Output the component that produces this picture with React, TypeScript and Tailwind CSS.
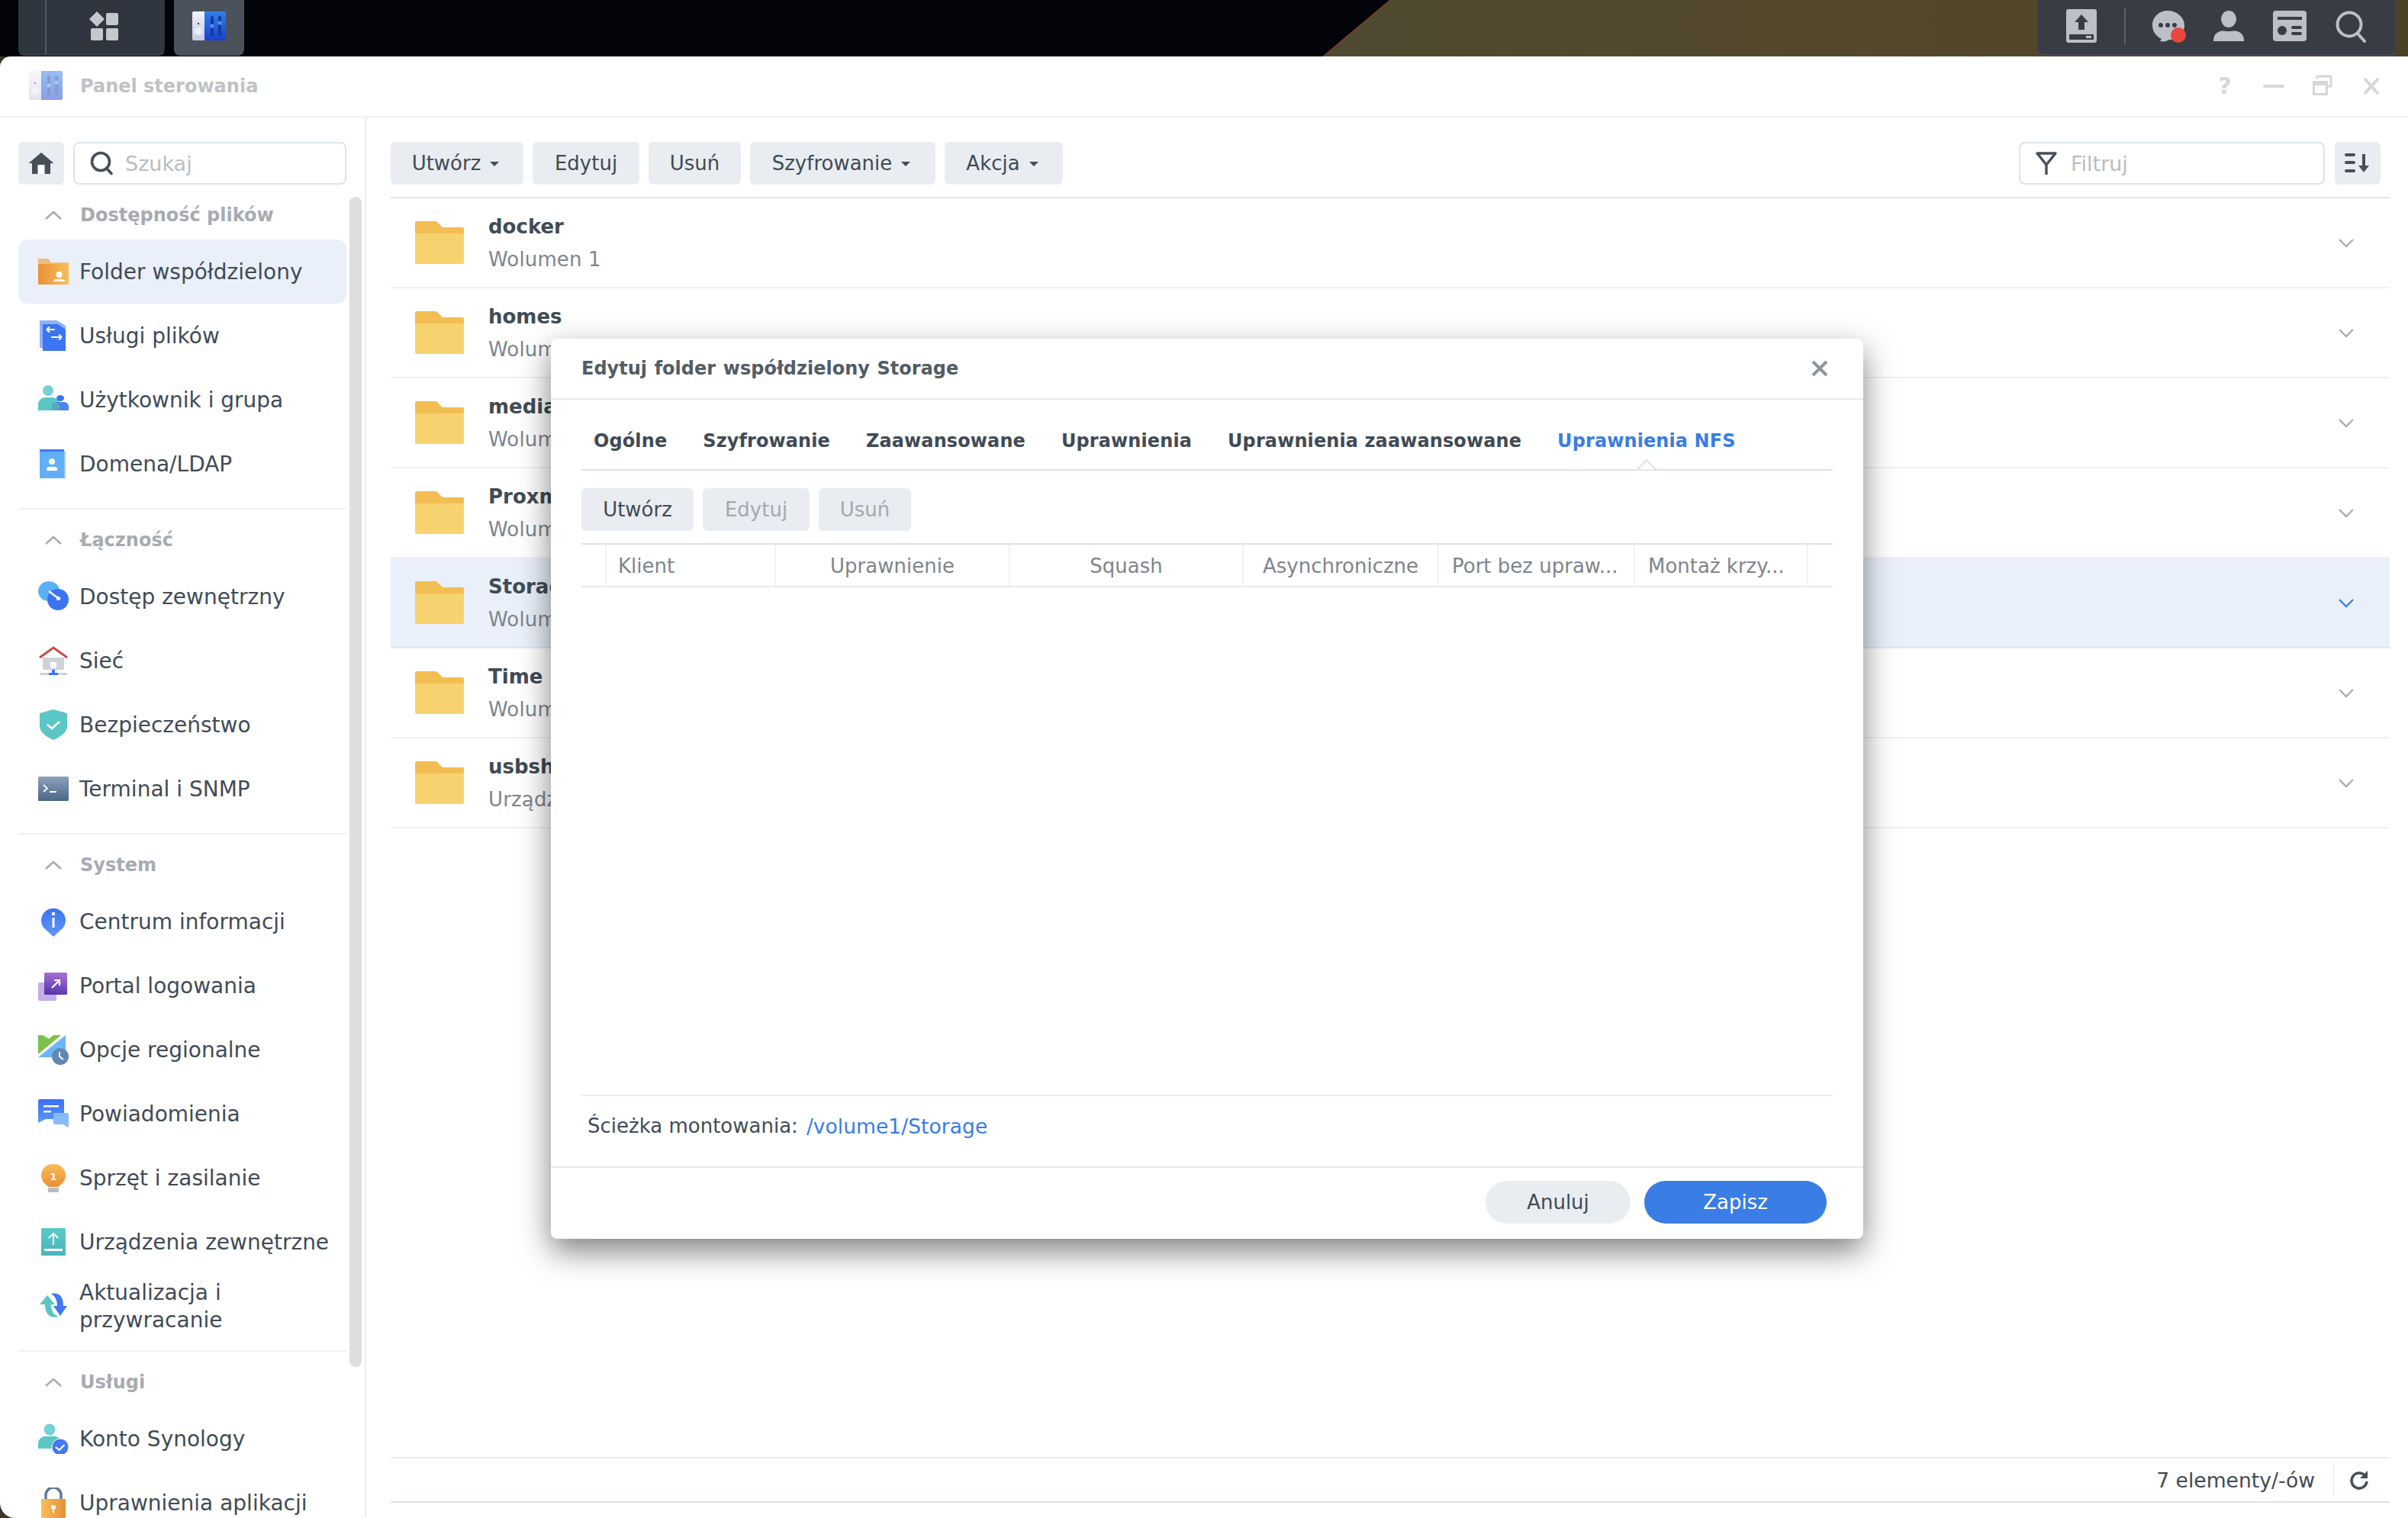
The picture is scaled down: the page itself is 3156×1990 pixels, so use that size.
import React from "react";

const Svg = ({ w = 40, h = 40, children }: { w?: number; h?: number; children: React.ReactNode }) => (
  <svg width={w} height={h} viewBox={`0 0 ${w} ${h}`} className="block shrink-0">{children}</svg>
);

const Grad = ({ id, a, b, x2 = 0, y2 = 1 }: { id: string; a: string; b: string; x2?: number; y2?: number }) => (
  <defs><linearGradient id={id} x1="0" y1="0" x2={x2} y2={y2}><stop offset="0" stopColor={a} /><stop offset="1" stopColor={b} /></linearGradient></defs>
);

const CtrlIcon = ({ pre }: { pre: string }) => (
  <svg width="44" height="40" viewBox="0 0 44 40" className="block shrink-0">
    <Grad id={pre + "l"} a="#f2f3fa" b="#c6c9e4" />
    <Grad id={pre + "r"} a="#2f80e8" b="#1a3fd0" />
    <path d="M2 0h14v38H2a2 2 0 0 1-2-2V2a2 2 0 0 1 2-2z" fill={`url(#${pre}l)`} />
    <path d="M16 0h26a2 2 0 0 1 2 2v34a2 2 0 0 1-2 2H16z" fill={`url(#${pre}r)`} />
    <circle cx="8" cy="16" r="1.2" fill="#444" />
    <circle cx="8" cy="26" r="5" fill="#eceef6" />
    <rect x="24" y="6" width="4" height="26" rx="2" fill="#123a9a" />
    <rect x="34" y="6" width="4" height="26" rx="2" fill="#123a9a" />
    <circle cx="26" cy="19" r="2.6" fill="#4c93f0" />
    <circle cx="36" cy="15" r="2.6" fill="#4c93f0" />
  </svg>
);

const icons: Record<string, React.ReactNode> = {
  folder: (
    <Svg>
      <Grad id="fo" a="#ec9138" b="#f5bf5b" x2={1} y2={0} />
      <path d="M0 4a1 1 0 0 1 1-1h12l4 6h23v27a1 1 0 0 1-1 1H0z" fill="url(#fo)" />
      <path d="M0 4a1 1 0 0 1 1-1h12l4 5h23v2H0z" fill="#eebd86" />
      <circle cx="27.5" cy="24" r="4" fill="#fff" />
      <path d="M20 33a3 3 0 0 1 3-3h9a3 3 0 0 1 3 3z" fill="#fff" />
    </Svg>
  ),
  files: (
    <Svg>
      <path d="M2 0h22l12 7v33H8v-4H2z" fill="#8fb1f6" />
      <path d="M6 5h20l10 7v28H6z" fill="#3d74f1" />
      <path d="M22 13H11m0 0l4-3.5M11 13l4 3.5M17 23h14m0 0l-4-3.5M31 23l-4 3.5" stroke="#fff" strokeWidth="1.8" fill="none" transform="translate(0 -1)" />
    </Svg>
  ),
  users: (
    <Svg>
      <circle cx="13" cy="8" r="7" fill="#76d0d6" />
      <path d="M0 34v-8a9 9 0 0 1 9-9h10a9 9 0 0 1 9 9v8z" fill="#5ac7c5" />
      <ellipse cx="29" cy="18" rx="5" ry="4" fill="#3d74f1" />
      <path d="M18 34v-5a6 6 0 0 1 6-6h10a6 6 0 0 1 6 6v5z" fill="#4c85f3" />
      <path d="M18 34v-5a6 6 0 0 1 5-6l5 3v8z" fill="#5aa6c5" />
    </Svg>
  ),
  domain: (
    <Svg>
      <rect x="2" y="1" width="32" height="36" rx="1" fill="#3f7bf0" />
      <rect x="2" y="4" width="34" height="35" rx="1" fill="#61aff8" />
      <rect x="34" y="5" width="2" height="33" fill="#a4cdf9" />
      <circle cx="18" cy="17" r="4" fill="#fff" />
      <path d="M11 27a3 3 0 0 1 3-3h8a3 3 0 0 1 3 3v2H11z" fill="#fff" />
    </Svg>
  ),
  external: (
    <Svg>
      <ellipse cx="14" cy="13" rx="14" ry="13" fill="#5cb0f8" />
      <ellipse cx="26" cy="24" rx="14" ry="14" fill="#3c74f0" />
      <path d="M14 13a14 13 0 0 0 12 8" fill="#2f62e2" />
      <path d="M14 13l12 9" stroke="#fff" strokeWidth="2.6" />
      <circle cx="26.5" cy="22.5" r="2.6" fill="#fff" />
    </Svg>
  ),
  network: (
    <Svg>
      <path d="M6 16h28v14a2 2 0 0 1-2 2H8a2 2 0 0 1-2-2z" fill="#cfd2d6" />
      <path d="M2 16L20 3l18 13" stroke="#cb4b3f" strokeWidth="3" fill="none" />
      <rect x="16" y="22" width="8" height="8" rx="1" fill="#fff" />
      <rect x="2" y="36" width="36" height="3" fill="#cfd2d6" />
      <rect x="14" y="36" width="12" height="3" fill="#3d74f1" />
      <rect x="18" y="32" width="4" height="5" fill="#3d74f1" />
    </Svg>
  ),
  security: (
    <Svg>
      <path d="M20 0l18 5v17c0 8-9 14-18 18C11 36 2 30 2 22V5z" fill="#5bc6c6" />
      <path d="M12 20l6 5 10-9" stroke="#fff" strokeWidth="2.6" fill="none" />
    </Svg>
  ),
  terminal: (
    <Svg>
      <Grad id="te" a="#8ba0bb" b="#4d6789" />
      <rect x="0" y="4" width="40" height="32" rx="1.5" fill="url(#te)" />
      <path d="M7 15l5 4.5-5 4.5" stroke="#fff" strokeWidth="1.8" fill="none" />
      <rect x="15" y="23" width="9" height="2" fill="#fff" />
    </Svg>
  ),
  info: (
    <Svg>
      <Grad id="in" a="#3d74f1" b="#6098f6" />
      <path d="M20 40L7 28A16 16 0 1 1 33 28z" fill="url(#in)" />
      <rect x="18" y="8" width="4" height="4" fill="#fff" />
      <rect x="18.5" y="15" width="3" height="13" fill="#fff" />
    </Svg>
  ),
  portal: (
    <Svg>
      <rect x="0" y="16" width="24" height="24" rx="2" fill="#c6ace9" />
      <Grad id="po" a="#a06bcf" b="#4a2fa8" x2={-0.2} y2={1} />
      <rect x="8" y="3" width="30" height="29" rx="1.5" fill="url(#po)" />
      <path d="M18 23l10-10m-7 0h7v7" stroke="#fff" strokeWidth="2.2" fill="none" />
    </Svg>
  ),
  regional: (
    <Svg>
      <path d="M0 1h18l18 0v29H0z" fill="#6bb6fb" />
      <path d="M0 1h36L0 26z" fill="#7cc14a" />
      <path d="M6 1h14l-6 5z" fill="#fff" opacity="0.9" />
      <path d="M0 26L30 1h6L0 30z" fill="#fff" />
      <circle cx="29" cy="29" r="11" fill="#6187b4" />
      <path d="M28 23v6l5 4" stroke="#fff" strokeWidth="1.8" fill="none" />
    </Svg>
  ),
  notify: (
    <Svg>
      <Grad id="no" a="#3c70f2" b="#5e97f7" />
      <path d="M2 1h30a2 2 0 0 1 2 2v24H10l-10 5V3a2 2 0 0 1 2-2z" fill="url(#no)" />
      <rect x="7" y="9" width="20" height="2.4" fill="#fff" />
      <rect x="7" y="16" width="10" height="2.4" fill="#fff" />
      <path d="M22 19h16a2 2 0 0 1 2 2v17l-8-4H22a2 2 0 0 1-2-2V21a2 2 0 0 1 2-2z" fill="#85bcfb" />
    </Svg>
  ),
  power: (
    <Svg>
      <Grad id="pw" a="#f6bf5a" b="#ea8e36" />
      <path d="M14 32C8 28 4 23 4 17 4 8 11 2 20 2s16 6 16 15c0 6-4 11-10 15z" fill="url(#pw)" />
      <rect x="13" y="33" width="14" height="6" rx="1" fill="#b8bcc4" />
      <text x="20" y="23" textAnchor="middle" fontSize="13" fontWeight="700" fill="#fff" fontFamily="DejaVu Sans">1</text>
    </Svg>
  ),
  external2: (
    <Svg>
      <Grad id="ex" a="#5cc9c9" b="#4ab4bc" />
      <rect x="4" y="2" width="32" height="36" rx="1.5" fill="url(#ex)" />
      <path d="M20 24V9m-6 6l6-6 6 6" stroke="#fff" strokeWidth="2" fill="none" />
      <rect x="8" y="29" width="24" height="3" fill="#fff" />
    </Svg>
  ),
  update: (
    <Svg>
      <path d="M2 18L12 6l10 12h-5c0 8 3 13 9 16-9 3-17-2-17-16z" fill="#5ac7c5" />
      <path d="M38 20l-9 13-9-13h5c0-8-3-13-8-16 9-2 16 2 16 16z" fill="#4378f2" />
    </Svg>
  ),
  account: (
    <Svg>
      <circle cx="15" cy="8" r="7.5" fill="#76d0d6" />
      <path d="M0 33v-7a9 9 0 0 1 9-9h13a9 9 0 0 1 9 9v7z" fill="#5ac7c5" />
      <circle cx="29" cy="31" r="11" fill="#4378f2" stroke="#fff" strokeWidth="1" />
      <path d="M23 31l4.5 4 7-7" stroke="#fff" strokeWidth="2.2" fill="none" />
    </Svg>
  ),
  lock: (
    <Svg>
      <path d="M10 16V10a10 10 0 0 1 20 0v6" stroke="#64789b" strokeWidth="3.5" fill="none" />
      <Grad id="lo" a="#f5bf5b" b="#ea8e36" x2={1} y2={0} />
      <rect x="4" y="15" width="32" height="25" rx="1" fill="url(#lo)" />
      <circle cx="20" cy="26" r="3" fill="#fff" />
      <rect x="19" y="27" width="2" height="6" fill="#fff" />
    </Svg>
  ),
};

const sections = [
  { title: "Dostępność plików", items: [["folder", "Folder współdzielony"], ["files", "Usługi plików"], ["users", "Użytkownik i grupa"], ["domain", "Domena/LDAP"]] },
  { title: "Łączność", items: [["external", "Dostęp zewnętrzny"], ["network", "Sieć"], ["security", "Bezpieczeństwo"], ["terminal", "Terminal i SNMP"]] },
  { title: "System", items: [["info", "Centrum informacji"], ["portal", "Portal logowania"], ["regional", "Opcje regionalne"], ["notify", "Powiadomienia"], ["power", "Sprzęt i zasilanie"], ["external2", "Urządzenia zewnętrzne"], ["update", "Aktualizacja i przywracanie"]] },
  { title: "Usługi", items: [["account", "Konto Synology"], ["lock", "Uprawnienia aplikacji"]] },
];

const rows = [
  ["docker", "Wolumen 1"], ["homes", "Wolumen 1"], ["media", "Wolumen 1"], ["Proxmox", "Wolumen 1"],
  ["Storage", "Wolumen 1"], ["Time Machine", "Wolumen 1"], ["usbshare1", "Urządzenie USB"],
];

const Caret = () => <span className="ml-[12px] inline-block w-0 h-0 border-x-[6px] border-x-transparent border-t-[6px] border-t-[#414b55]" />;

const Btn = ({ label, w, caret, off }: { label: string; w: string; caret?: boolean; off?: boolean }) => (
  <button className={`${w} h-[56px] rounded-[6px] bg-[#e9edf1] flex items-center justify-center text-[26px] pt-[1px] ${caret ? "pr-[4px]" : ""} ${off ? "text-[#a3a9af]" : "text-[#414b55]"}`}>
    {label}{caret && <Caret />}
  </button>
);

const SearchGlyph = () => (
  <svg width="30" height="32" viewBox="0 0 30 32" className="block shrink-0">
    <circle cx="14" cy="14" r="11.5" stroke="#474f59" strokeWidth="3.6" fill="none" />
    <path d="M22 23l6 6.5" stroke="#474f59" strokeWidth="3.6" strokeLinecap="round" />
  </svg>
);

const Chevron = ({ color }: { color: string }) => (
  <svg width="22" height="14" viewBox="0 0 22 14" className="block">
    <path d="M2 3l9 9 9-9" stroke={color} strokeWidth="2.4" fill="none" />
  </svg>
);

function Sidebar() {
  return (
    <aside className="relative w-[480px] h-full shrink-0 border-r-2 border-[#e9edf3] overflow-hidden pl-[24px] pr-[24px] pt-[32px]">
      <div className="flex gap-[12px] w-[430px]">
        <button className="w-[60px] h-[56px] rounded-[6px] bg-[#e9edf1] flex items-center justify-center">
          <svg width="34" height="30" viewBox="0 0 34 30">
            <path d="M17 1L0.5 15H5v14h24V15h4.5z" fill="#474f59" />
            <rect x="12.5" y="17" width="9" height="12" fill="#fff" />
          </svg>
        </button>
        <div className="w-[358px] h-[56px] rounded-[8px] border-2 border-[#dde3ec] flex items-center pl-[20px] gap-[16px]">
          <SearchGlyph />
          <span className="text-[27px] pt-[2px] text-[#b9bdc2]">Szukaj</span>
        </div>
      </div>
      <div className="pt-[8px] w-[430px]">
        {sections.map((s, i) => (
          <section key={s.title} className={i < 3 ? "border-b-2 border-[#eef0f4] pb-[16px] mb-[8px]" : ""}>
            <div className="h-[64px] flex items-center pl-[34px]">
              <svg width="24" height="14" viewBox="0 0 24 14" className="block">
                <path d="M2 12L12 3l10 9" stroke="#a9adb2" strokeWidth="2.6" fill="none" />
              </svg>
              <span className="ml-[23px] text-[24px] font-bold text-[#a7abb1] whitespace-nowrap">{s.title}</span>
            </div>
            {s.items.map(([ic, label], k) => (
              <div key={label} className={`h-[84px] rounded-[12px] flex items-center pl-[26px] gap-[14px] ${i === 0 && k === 0 ? "bg-[#e9f0fa]" : ""}`}>
                {icons[ic]}
                <span className="text-[28px] leading-[36px] pt-[2px] text-[#414b55]">{label}</span>
              </div>
            ))}
          </section>
        ))}
      </div>
      <div className="absolute left-[458px] top-[104px] w-[16px] h-[1534px] rounded-full bg-[#dedede]" />
    </aside>
  );
}

function Main() {
  return (
    <main className="flex-1 h-full flex flex-col pl-[32px] pr-[24px] pb-[20px] min-w-0">
      <div className="h-[106px] pt-[32px] border-b-2 border-[#dde3ec] flex gap-[12px] shrink-0">
        <Btn label="Utwórz" w="w-[174px]" caret />
        <Btn label="Edytuj" w="w-[140px]" />
        <Btn label="Usuń" w="w-[121px]" />
        <Btn label="Szyfrowanie" w="w-[243px]" caret />
        <Btn label="Akcja" w="w-[155px]" caret />
        <div className="ml-auto w-[401px] h-[56px] rounded-[8px] border-2 border-[#dde3ec] flex items-center pl-[20px] gap-[18px]">
          <svg width="28" height="30" viewBox="0 0 28 30" className="block shrink-0">
            <path d="M2 2h24L14 17z M14 17v12" stroke="#474f59" strokeWidth="3.4" fill="none" strokeLinecap="round" strokeLinejoin="round" />
          </svg>
          <span className="text-[27px] pt-[2px] text-[#b9bdc2]">Filtruj</span>
        </div>
        <button className="w-[60px] h-[56px] ml-px mr-[12px] rounded-[6px] bg-[#e9edf1] flex items-center justify-center">
          <svg width="34" height="28" viewBox="0 0 34 28">
            <path d="M2 3h10M2 13h10M2 24h10" stroke="#474f59" strokeWidth="4" strokeLinecap="round" />
            <path d="M25 2v18" stroke="#474f59" strokeWidth="4" />
            <path d="M18 17h14l-7 9z" fill="#474f59" />
          </svg>
        </button>
      </div>
      <div className="flex-1 min-h-0">
        {rows.map(([t, s]) => {
          const sel = t === "Storage";
          return (
            <div key={t} className={`h-[118px] border-b-2 flex items-center pl-[32px] pr-[46px] ${sel ? "bg-[#e9f0fa] border-[#dfe6f0]" : "border-[#eef1f5]"}`}>
              <svg width="64" height="56" viewBox="0 0 64 56" className="block shrink-0">
                <path d="M0 2a2 2 0 0 1 2-2h26l8 8h26a2 2 0 0 1 2 2v10H0z" fill="#f2bd52" />
                <path d="M0 16h64v38a2 2 0 0 1-2 2H2a2 2 0 0 1-2-2z" fill="#f7d36f" />
              </svg>
              <div className="ml-[32px] pt-[1px] flex flex-col gap-[9px] whitespace-nowrap">
                <span className="text-[26px] leading-[34px] font-bold text-[#414b55]">{t}</span>
                <span className="text-[26px] tracking-[0.15px] leading-[34px] text-[#7e858c]">{s}</span>
              </div>
              <div className="ml-auto"><Chevron color={sel ? "#3a7de4" : "#a9adb2"} /></div>
            </div>
          );
        })}
      </div>
      <div className="h-[60px] shrink-0 border-y-2 border-t-[#e9edf1] border-b-[#dde3ec] flex items-center justify-end">
        <span className="text-[26.6px] pt-[1px] text-[#414b55]">7 elementy/-ów</span>
        <span className="ml-[24px] w-px h-[40px] bg-[#dde3ec]" />
        <svg width="26" height="26" viewBox="0 0 26 26" className="ml-[20px] mr-[27px] block">
          <path d="M21 8A10 10 0 1 0 23 15" stroke="#474f59" strokeWidth="3.6" fill="none" />
          <path d="M24 1v10H14z" fill="#474f59" />
        </svg>
      </div>
    </main>
  );
}

const columns: [string, string, string][] = [
  ["", "w-[33px]", ""],
  ["Klient", "w-[222px]", "pl-[15px]"],
  ["Uprawnienie", "w-[307px]", "justify-center"],
  ["Squash", "w-[306px]", "justify-center"],
  ["Asynchroniczne", "w-[256px]", "justify-center"],
  ["Port bez upraw...", "w-[257px]", "pl-[17px]"],
  ["Montaż krzy...", "w-[227px]", "pl-[17px]"],
];

function Dialog() {
  const tabs = ["Ogólne", "Szyfrowanie", "Zaawansowane", "Uprawnienia", "Uprawnienia zaawansowane", "Uprawnienia NFS"];
  return (
    <div className="absolute left-[722px] top-[444px] w-[1720px] h-[1180px] rounded-[8px] bg-white flex flex-col shadow-[0_16px_40px_rgba(0,0,0,0.5)]">
      <div className="h-[80px] shrink-0 border-b-2 border-[#e6eaef] flex items-center justify-between pl-[40px] pr-[46px]">
        <span className="text-[24px] [word-spacing:1.3px] font-bold text-[#545c65]">Edytuj folder współdzielony Storage</span>
        <svg width="22" height="22" viewBox="0 0 22 22" className="block">
          <path d="M2 2l18 18M20 2L2 20" stroke="#8f959b" strokeWidth="4" />
        </svg>
      </div>
      <div className="flex-1 flex flex-col px-[40px] min-h-0">
        <div className="relative h-[93px] shrink-0 border-b-2 border-[#dde3ec] flex items-center gap-[47px] pl-[16px] pt-[17px]">
          {tabs.map((t, i) => (
            <span key={t} className={`text-[24px] tracking-[0.1px] font-bold whitespace-nowrap ${i === 5 ? "text-[#3a7de4]" : "text-[#414b55]"}`}>{t}</span>
          ))}
          <svg width="26" height="15" viewBox="0 0 26 15" className="absolute left-[1383px] bottom-[-2px] block">
            <path d="M0 13.5h1L13 1l12 12.5h1" stroke="#dde3ec" strokeWidth="2" fill="#fff" />
          </svg>
        </div>
        <div className="flex gap-[12px] mt-[23px] shrink-0">
          <Btn label="Utwórz" w="w-[147px]" />
          <Btn label="Edytuj" w="w-[140px]" off />
          <Btn label="Usuń" w="w-[121px]" off />
        </div>
        <div className="mt-[16px] h-[58px] shrink-0 border-y-2 border-t-[#dde3ec] border-b-[#e6eaef] flex">
          {columns.map(([c, w, a]) => (
            <div key={w + c} className={`${w} h-full pt-[2px] border-r-2 border-[#eef1f5] flex items-center text-[26px] text-[#7e858c] whitespace-nowrap ${a}`}>{c}</div>
          ))}
        </div>
        <div className="flex-1" />
        <div className="h-[94px] shrink-0 border-t-2 border-[#e9edf1] flex items-center pl-[8px] pb-[13px] text-[26px] text-[#414b55] whitespace-nowrap">
          Ścieżka montowania:<span className="ml-[11px] text-[26.6px] text-[#3a7de4]">/volume1/Storage</span>
        </div>
      </div>
      <div className="h-[95px] shrink-0 border-t-2 border-[#e6eaef] flex justify-end gap-[18px] pt-[17px] pr-[48px]">
        <button className="w-[190px] h-[56px] rounded-full bg-[#e9edf1] text-[26px] pt-[1px] text-[#414b55]">Anuluj</button>
        <button className="w-[239px] h-[56px] rounded-full bg-[#3a7de4] text-[26px] pt-[1px] text-white">Zapisz</button>
      </div>
    </div>
  );
}

function Taskbar() {
  return (
    <header className="relative h-[74px] shrink-0 bg-[#02040a] flex">
      <div className="absolute inset-y-0 left-[1733px] right-0 bg-[#8a3a26] [clip-path:polygon(88px_0,100%_0,100%_100%,0_100%)]" />
      <div className="absolute inset-y-0 left-[1735px] right-0 bg-gradient-to-r from-[#4f4a32] via-[#55482c] to-[#4a4228] [clip-path:polygon(88px_0,100%_0,100%_100%,0_100%)]" />
      <div className="relative ml-[24px] w-[192px] h-[73px] rounded-b-[8px] bg-[#2f3640] border-b-2 border-[#3b424c] flex">
        <div className="w-[37px] border-r-2 border-[#545a63]" />
        <svg width="58" height="44" viewBox="0 0 58 44" className="ml-[56px] mt-[15px] block">
          <path d="M10 0l10 10-10 10L0 10z" fill="#c5c8cb" />
          <rect x="22" y="2" width="16" height="16" rx="2" fill="#c5c8cb" />
          <rect x="2" y="22" width="16" height="16" rx="2" fill="#c5c8cb" />
          <rect x="22" y="22" width="16" height="16" rx="2" fill="#c5c8cb" />
        </svg>
      </div>
      <div className="relative ml-[12px] w-[92px] h-[73px] rounded-b-[8px] bg-[#4c525b] pl-[24px] pt-[15px]">
        <CtrlIcon pre="tb" />
      </div>
      <div className="relative ml-auto mr-[16px] w-[469px] h-[73px] rounded-b-[8px] bg-[#383d45] border-b-2 border-[#454a52] flex items-start pt-[12px] pl-[37px]">
        <svg width="40" height="44" viewBox="0 0 40 44" className="block shrink-0">
          <rect width="40" height="44" rx="3" fill="#bcc0c6" />
          <path d="M20 7l-9 10h5v10h8V17h5z" fill="#383d45" />
          <rect x="4" y="33" width="32" height="7" fill="#383d45" />
          <rect x="26" y="35" width="7" height="3" fill="#bcc0c6" />
        </svg>
        <div className="ml-[36px] -mt-[2px] w-[2px] h-[48px] bg-[#5c6168]" />
        <svg width="46" height="46" viewBox="0 0 46 46" className="ml-[35px] block shrink-0">
          <path d="M20 2C9 2 0 10 0 21c0 8 5 15 12 18l-2 3c5 1 9 0 12-2 11 0 20-8 20-19S31 2 20 2z" fill="#bcc0c6" />
          <circle cx="11" cy="21" r="3" fill="#383d45" />
          <circle cx="20" cy="21" r="3" fill="#383d45" />
          <circle cx="29" cy="21" r="3" fill="#383d45" />
          <ellipse cx="34" cy="34" rx="10" ry="10" fill="#e8483e" />
        </svg>
        <svg width="40" height="42" viewBox="0 0 40 42" className="ml-[34px] mt-[2px] block shrink-0">
          <ellipse cx="20" cy="11" rx="10" ry="11" fill="#bcc0c6" />
          <path d="M0 40c0-8 3-11 9-13 3-1 5 0 11 0s8-1 11 0c6 2 9 5 9 13z" fill="#bcc0c6" />
        </svg>
        <svg width="44" height="40" viewBox="0 0 44 40" className="ml-[38px] mt-[2px] block shrink-0">
          <rect width="44" height="40" rx="4" fill="#bcc0c6" />
          <rect x="6" y="8" width="32" height="4" fill="#383d45" />
          <ellipse cx="12" cy="26" rx="6" ry="6" fill="#383d45" />
          <rect x="24" y="20" width="14" height="4" rx="2" fill="#383d45" />
          <rect x="24" y="28" width="14" height="4" rx="2" fill="#383d45" />
        </svg>
        <svg width="42" height="42" viewBox="0 0 42 42" className="ml-[38px] mt-[2px] block shrink-0">
          <circle cx="18" cy="18" r="15.5" stroke="#bcc0c6" strokeWidth="4" fill="none" />
          <path d="M29 30l9 10" stroke="#bcc0c6" strokeWidth="4" strokeLinecap="round" />
        </svg>
      </div>
    </header>
  );
}

export default function App() {
  return (
    <div className="relative w-[3156px] h-[1990px] overflow-hidden flex flex-col bg-[#3d3526] font-['DejaVu_Sans',sans-serif]">
      <Taskbar />
      <div className="flex-1 min-h-0 rounded-tl-[14px] rounded-bl-[20px] bg-white flex flex-col overflow-hidden">
        <div className="h-[80px] shrink-0 border-b-2 border-[#f2f3f6] flex items-center pl-[38px] pr-[28px]">
          <div className="opacity-50"><CtrlIcon pre="ti" /></div>
          <span className="ml-[23px] text-[24px] font-bold text-[#bfc2c5]">Panel sterowania</span>
          <div className="ml-auto flex gap-[24px] items-center text-[#d5d7d9]">
            <span className="w-[40px] text-center text-[30px] font-bold leading-none">?</span>
            <svg width="40" height="40" viewBox="0 0 40 40" className="block"><path d="M8 20h24" stroke="#d5d7d9" strokeWidth="4" strokeLinecap="round" /></svg>
            <svg width="40" height="40" viewBox="0 0 40 40" className="block">
              <path d="M13 10V7h18v13h-4" stroke="#d5d7d9" strokeWidth="3" fill="none" />
              <rect x="8.5" y="14.5" width="17" height="16" stroke="#d5d7d9" strokeWidth="3" fill="none" />
              <rect x="8" y="14" width="18" height="5" fill="#d5d7d9" />
            </svg>
            <svg width="40" height="40" viewBox="0 0 40 40" className="block"><path d="M11 10l18 20M29 10L11 30" stroke="#d5d7d9" strokeWidth="4" /></svg>
          </div>
        </div>
        <div className="flex-1 min-h-0 flex">
          <Sidebar />
          <Main />
        </div>
      </div>
      <Dialog />
    </div>
  );
}
